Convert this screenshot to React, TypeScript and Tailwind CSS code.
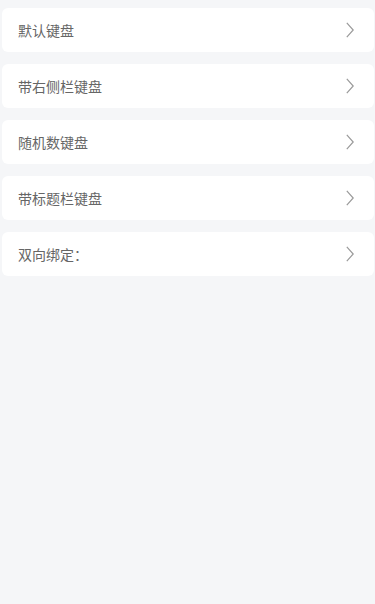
import React from "react";

const items = ["默认键盘", "带右侧栏键盘", "随机数键盘", "带标题栏键盘", "双向绑定："];

export default function App() {
  return (
    <div
      className="min-h-[604px] w-[375px] bg-[#f5f6f8] pt-2"
      style={{ fontFamily: '"Noto Sans CJK SC", "Noto Sans", sans-serif' }}
    >
      <div className="flex flex-col gap-3">
        {items.map((t) => (
          <div
            key={t}
            className="ml-[2px] mr-[1px] flex h-[44px] items-center justify-between rounded-[6px] bg-white pl-4 pr-5"
          >
            <span className="text-[14px] leading-none text-[#666666]">{t}</span>
            <svg width="8" height="16" viewBox="0 0 8 16" fill="none">
              <path d="M0.8 0.8 L7.2 8 L0.8 15.2" stroke="#9a9a9a" strokeWidth="1.2" />
            </svg>
          </div>
        ))}
      </div>
    </div>
  );
}
